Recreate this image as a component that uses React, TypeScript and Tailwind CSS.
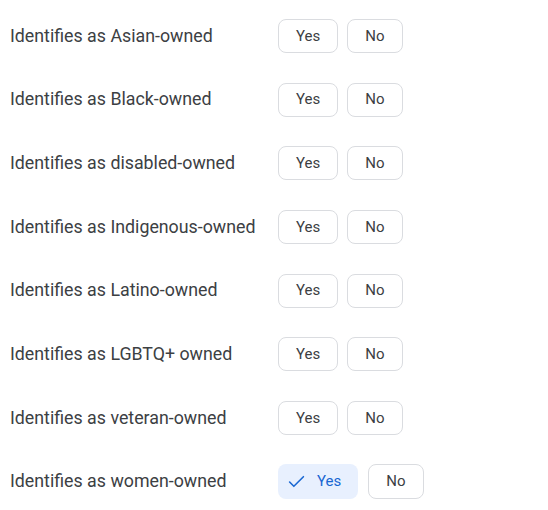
const labels = [
  'Identifies as Asian-owned',
  'Identifies as Black-owned',
  'Identifies as disabled-owned',
  'Identifies as Indigenous-owned',
  'Identifies as Latino-owned',
  'Identifies as LGBTQ+ owned',
  'Identifies as veteran-owned',
  'Identifies as women-owned',
];

function CheckIcon() {
  return (
    <svg width="17" height="17" viewBox="0 0 16 16" fill="none" stroke="currentColor" strokeWidth="1.5" strokeLinecap="round" strokeLinejoin="round" aria-hidden="true">
      <path d="M1.5 8.5l4 4L14.5 3.5" />
    </svg>
  );
}

function Row({ label, selected }: { label: string; selected: boolean }) {
  return (
    <div className="flex h-[63.7px] items-center">
      <div className="w-[268px] shrink-0 text-[17.8px] text-[#3c4043]">{label}</div>
      <div className={`flex ${selected ? 'gap-[10px]' : 'gap-[9px]'}`}>
        {selected ? (
          <button
            type="button"
            className="flex h-[35px] items-center gap-[12px] rounded-[8px] bg-[#e8f0fe] pl-[10px] pr-[17px] text-[15px] font-normal text-[#1967d2]"
          >
            <CheckIcon />
            Yes
          </button>
        ) : (
          <button
            type="button"
            className="h-[34px] rounded-[8px] border border-[#dadce0] px-[17px] text-[15px] font-normal text-[#3c4043]"
          >
            Yes
          </button>
        )}
        <button
          type="button"
          className={`rounded-[8px] border border-[#dadce0] px-[17px] text-[15px] font-normal text-[#3c4043] ${selected ? 'h-[35px]' : 'h-[34px]'}`}
        >
          No
        </button>
      </div>
    </div>
  );
}

export default function App() {
  return (
    <div className="min-h-[510px] w-[548px] bg-white pl-[10px] pt-[4px]" style={{ fontFamily: 'Roboto, "Liberation Sans", sans-serif' }}>
      {labels.map((l, i) => (
        <Row key={l} label={l} selected={i === labels.length - 1} />
      ))}
    </div>
  );
}
